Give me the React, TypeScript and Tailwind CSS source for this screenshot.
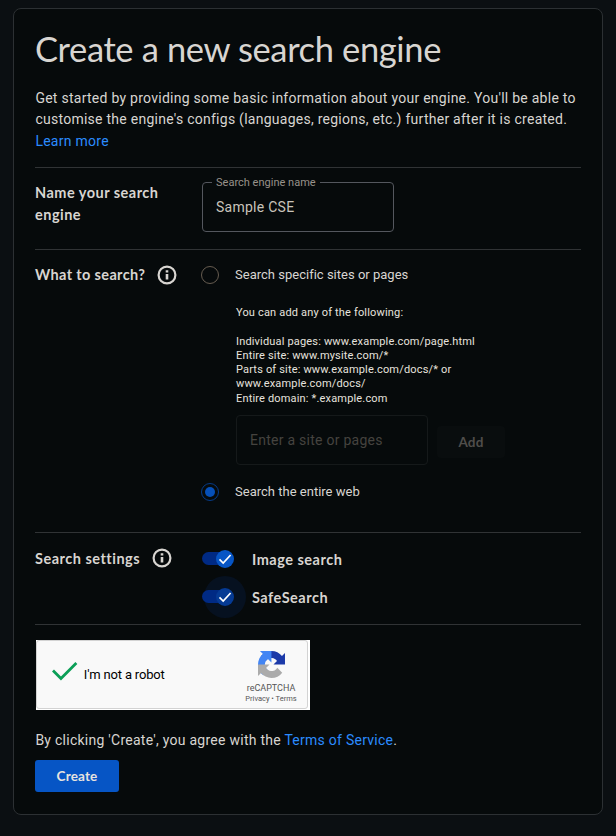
import React from "react";

const google = "font-['Lato','Inter',sans-serif]";

function InfoIcon() {
  return (
    <svg width="20" height="20" viewBox="0 0 20 20" fill="none" className="block shrink-0">
      <circle cx="10" cy="10" r="8.4" stroke="#d8d5d1" strokeWidth="2.2" />
      <path d="M10 9v5.6M10 5.2v2.2" stroke="#d8d5d1" strokeWidth="2.6" />
    </svg>
  );
}

function Toggle({ focused = false }: { focused?: boolean }) {
  return (
    <span className="relative block h-5 w-8 shrink-0">
      {focused && <span className="absolute -top-[11px] left-[2px] size-[42px] rounded-full bg-[#061120]" />}
      <span className="absolute left-0 top-[3px] h-[13px] w-[31px] rounded-full bg-[#002a84]" />
      <span
        className={
          "absolute left-[14px] top-[1px] flex size-[18px] items-center justify-center rounded-full " +
          (focused ? "bg-[#053a94]" : "bg-[#0655c5]")
        }
      >
        <svg width="14" height="14" viewBox="0 0 14 14" fill="none">
          <path d="M1.5 7.4 5.2 11 12.6 3" stroke="#fff" strokeWidth="1.7" />
        </svg>
      </span>
    </span>
  );
}

function RecaptchaLogo() {
  return (
    <svg width="27" height="27" viewBox="0 0 64 64" className="block">
      <path d="M64 31.955a33 33 0 0 0-.037-1.38V4.687l-7.157 7.157C50.948 4.674 42.033.093 32.05.093c-10.389 0-19.618 4.96-25.458 12.642l11.731 11.854a15.55 15.55 0 0 1 4.754-5.334c2.05-1.6 4.952-2.906 8.968-2.906.485 0 .86.057 1.135.163 4.976.393 9.288 3.14 11.828 7.124l-8.304 8.304L64 31.955" fill="#1c3aa9" />
      <path d="M31.862.094c-.465.007-.922.018-1.376.037H4.594l7.157 7.157C4.581 13.146 0 22.06 0 32.044c0 10.388 4.96 19.618 12.642 25.457l11.854-11.73a15.55 15.55 0 0 1-5.334-4.755c-1.6-2.05-2.906-4.952-2.906-8.967 0-.485.057-.86.163-1.135.393-4.976 3.14-9.289 7.124-11.829l8.304 8.304.015-27.295" fill="#4285f4" />
      <path d="M.001 32.045q.009.693.037 1.38v25.888l7.157-7.157c5.858 7.17 14.773 11.751 24.756 11.751 10.39 0 19.619-4.96 25.458-12.642L45.678 39.411a15.54 15.54 0 0 1-4.754 5.334c-2.05 1.6-4.952 2.906-8.968 2.906-.485 0-.859-.057-1.135-.163-4.976-.393-9.288-3.14-11.828-7.124l8.304-8.304L0 32.045" fill="#ababab" />
    </svg>
  );
}

export default function App() {
  return (
    <div className="h-[836px] w-[616px] bg-[#0b0f12] px-[13px] pt-2 font-['Roboto',sans-serif] text-[#d8d5d1]">
      <main className="h-[807px] w-[590px] rounded-lg border border-[#2c3033] bg-[#060a0b] px-[21px]">
        <header className="h-[159px] border-b border-[#303335] pt-[18px]">
          <h1 className={`${google} whitespace-nowrap text-[34.5px] leading-[44px] tracking-[-0.37px]`}>Create a new search engine</h1>
          <p className="mt-[17px] whitespace-nowrap pl-[0.4px] text-[14px] leading-[21.3px] tracking-[0.26px]">
            Get started by providing some basic information about your engine. You'll be able to
            <br />
            customise the engine's configs (languages, regions, etc.) further after it is created.
            <br />
            <a className="text-[#2b8cff]">Learn more</a>
          </p>
        </header>

        <section className="flex h-[82px] border-b border-[#303335] pt-[13px]">
          <h2 className={`${google} w-[167px] pt-[1px] text-[14.5px] font-bold leading-[22px] tracking-[0.48px]`}>
            Name your search
            <br />
            engine
          </h2>
          <fieldset className="-mt-[5px] h-[56px] w-[192px] rounded border border-[#54575e] pl-[13px]">
            <legend className="-ml-[4px] h-[12px] px-1 text-[11px] leading-[13px] tracking-[0.01px] text-[#98928a]">Search engine name</legend>
            <div className="pt-[9px] text-[14px] leading-[20px] tracking-[0.26px] text-[#c9c4bb]">Sample CSE</div>
          </fieldset>
        </section>

        <section className="flex h-[283px] border-b border-[#303335] pt-[14px]">
          <div className="flex h-[22px] w-[166px] items-center">
            <h2 className={`${google} w-[122px] whitespace-nowrap text-[14.5px] font-bold leading-[22px] tracking-[0.36px]`}>What to search?</h2>
            <InfoIcon />
          </div>
          <div>
            <div className="flex h-[22px] items-center gap-[16px]">
              <span className="size-[18px] rounded-full border border-[#665c50]" />
              <span className="text-[13px] leading-[20px] tracking-[0.01px]">Search specific sites or pages</span>
            </div>
            <div className="ml-[35px] mt-[20px] whitespace-nowrap text-[11px] leading-[14.3px] tracking-[0.17px] text-[#e6e3df]">
              You can add any of the following:
              <br />
              <br />
              Individual pages: www.example.com/page.html
              <br />
              Entire site: www.mysite.com/*
              <br />
              Parts of site: www.example.com/docs/* or
              <br />
              www.example.com/docs/
              <br />
              Entire domain: *.example.com
            </div>
            <div className="ml-[35px] mt-[8.7px] flex gap-[9px]">
              <div className="flex h-[50px] w-[192px] items-center rounded border border-[#15191a] pl-[13px] pt-[2px] text-[14px] tracking-[0.26px] text-[#45433f]">Enter a site or pages</div>
              <div className={`${google} mt-[11px] flex h-8 w-[68px] items-center justify-center rounded bg-[#090d0e] text-[13.5px] font-bold tracking-[0.2px] text-[#504e4b]`}>Add</div>
            </div>
            <div className="mt-[16px] flex h-[22px] items-center gap-[16px]">
              <span className="flex size-[18px] items-center justify-center rounded-full border border-[#053a85]">
                <span className="size-[10px] rounded-full bg-[#0650b8]" />
              </span>
              <span className="text-[13px] leading-[20px] tracking-[0.01px]">Search the entire web</span>
            </div>
          </div>
        </section>

        <section className={`${google} flex h-[92px] border-b border-[#303335] pt-[14px] text-[14.5px] font-bold tracking-[0.5px]`}>
          <div className="flex h-[22px] w-[167px] items-center">
            <h2 className="w-[117px] whitespace-nowrap pt-[1px] leading-[22px]">Search settings</h2>
            <InfoIcon />
          </div>
          <div className="flex flex-col gap-[18px] pt-[2px]">
            <div className="flex h-5 items-center gap-[18px]">
              <Toggle />
              <span className="pt-[2px]">Image search</span>
            </div>
            <div className="flex h-5 items-center gap-[18px]">
              <Toggle focused />
              <span className="pt-[2px]">SafeSearch</span>
            </div>
          </div>
        </section>

        <div className="ml-[1px] mt-[15px] h-[70px] w-[274px] bg-white text-black">
          <div className="flex h-[69px] w-[272px] items-center rounded-[3px] border border-[#d3d3d3] bg-[#f9f9f9]">
            <svg width="26" height="20" viewBox="0 0 26 20" fill="none" className="-mt-[8px] ml-[15px]">
              <path d="M1 9.5 9 17.5 24.5 2" stroke="#0b9f57" strokeWidth="2.8" />
            </svg>
            <span className="ml-[6px] w-[152px] text-[13px] tracking-[-0.17px]">I'm not a robot</span>
            <div className="flex w-[72px] shrink-0 flex-col items-center pt-[5px] text-[#555]">
              <RecaptchaLogo />
              <span className="mt-[4px] text-[9px] leading-[12px]">reCAPTCHA</span>
              <span className="whitespace-nowrap text-[7.5px] leading-[10px]">Privacy • Terms</span>
            </div>
          </div>
        </div>

        <p className="mt-[20px] pl-[0.4px] text-[14px] leading-[21px] tracking-[0.26px]">
          By clicking 'Create', you agree with the <a className="text-[#2b8cff]">Terms of Service</a>.
        </p>
        <button className={`${google} mt-[9px] flex h-8 w-[84px] items-center justify-center rounded-[3px] bg-[#0655c5] text-[13.5px] font-bold tracking-[0.15px] text-[#e6e3df]`}>Create</button>
      </main>
    </div>
  );
}
